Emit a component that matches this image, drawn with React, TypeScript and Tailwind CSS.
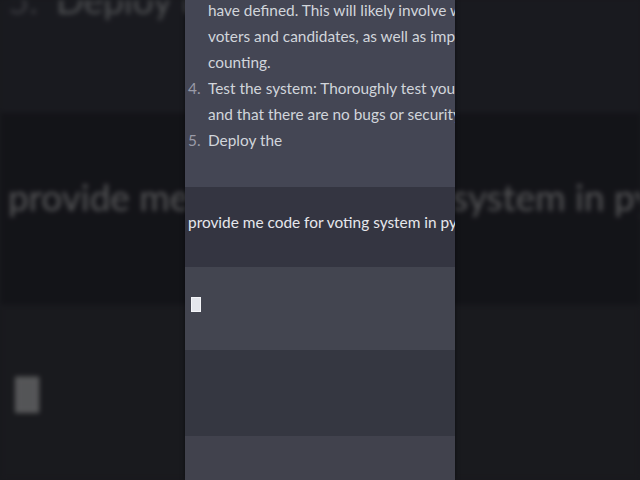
import React from "react";

function ChatContent() {
  return (
    <div className="w-[640px] flex flex-col text-[15.4px] leading-[26px] [font-family:Lato,'Open_Sans',sans-serif]">
      {/* assistant answer */}
      <div className="h-[190px] bg-[#444654] text-[#d1d5db] flex flex-col mt-[-3px]">
        <div className="pl-[23px] flex flex-col whitespace-nowrap">
          <p>have defined. This will likely involve writing code to handle the registration of</p>
          <p>voters and candidates, as well as implementing the logic for casting and</p>
          <p>counting.</p>
        </div>
        <div className="flex whitespace-nowrap">
          <span className="w-[23px] pl-[3px] text-[#9a9ba8]">4.</span>
          <div className="flex flex-col">
            <p>Test the system: Thoroughly test your voting system to ensure that it works</p>
            <p>and that there are no bugs or security vulnerabilities.</p>
          </div>
        </div>
        <div className="flex whitespace-nowrap">
          <span className="w-[23px] pl-[3px] text-[#9a9ba8]">5.</span>
          <p>Deploy the</p>
        </div>
      </div>
      {/* user prompt */}
      <div className="h-[80px] bg-[#343541] flex items-center pl-[3px] text-[#e6e7ec] whitespace-nowrap">
        <p className="mt-[-10px]">provide me code for voting system in python</p>
      </div>
      {/* streaming answer */}
      <div className="h-[83px] bg-[#434550] pl-[6px] pt-[30px]">
        <div className="w-[10px] h-[15px] bg-[#e4e6ec] border border-[#f4f5f8]" />
      </div>
      <div className="h-[86px] bg-[#353741]" />
      <div className="h-[60px] bg-[#41424d]" />
    </div>
  );
}

export default function App() {
  return (
    <div className="relative w-[640px] h-[480px] overflow-hidden bg-[#18191d]">
      <div className="absolute inset-0 overflow-hidden blur-[2.5px] brightness-[0.37]">
        <div className="absolute left-0 top-0 origin-top-left [transform:scale(2.4)_translate(0.3px,-140px)]">
          <ChatContent />
        </div>
      </div>
      <div className="relative flex justify-center h-full">
        <div className="w-[270px] h-full overflow-hidden shadow-[0_0_4px_rgba(0,0,0,0.5)]">
          <ChatContent />
        </div>
      </div>
    </div>
  );
}
